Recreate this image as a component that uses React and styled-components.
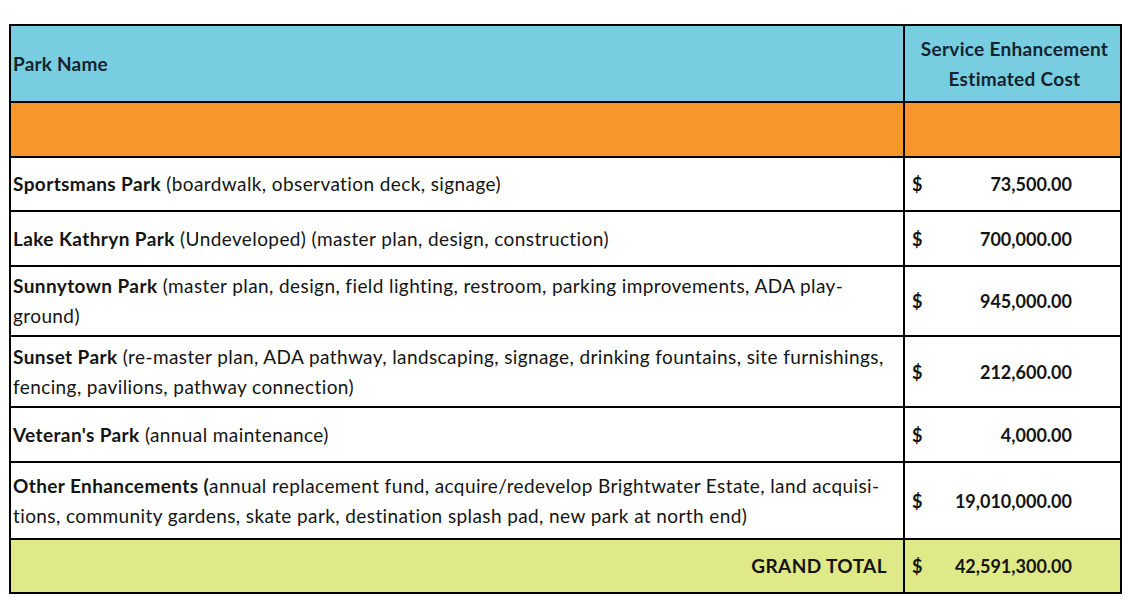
import React from 'react';
import styled, { createGlobalStyle } from 'styled-components';

const GlobalStyle = createGlobalStyle`
  html, body {
    margin: 0;
    background: #ffffff;
  }
  body {
    font-family: Lato, 'Open Sans', sans-serif;
    color: #141414;
  }
`;

const Page = styled.div`
  padding: 24px 0 0 9px;
`;

const Table = styled.div`
  display: grid;
  grid-template-columns: 892px 215px;
  gap: 2px;
  padding: 2px;
  width: max-content;
  background: #000;
`;

const Cell = styled.div`
  display: flex;
  align-items: center;
  min-height: ${(p) => p.$h}px;
  background: ${(p) => p.$bg || '#ffffff'};
  font-size: 18px;
  line-height: 30px;
`;

const NameCell = styled(Cell)`
  font-size: 19px;
  letter-spacing: 0.4px;
  padding: 0 2px;
  justify-content: ${(p) => (p.$right ? 'flex-end' : 'flex-start')};
  padding-right: ${(p) => (p.$right ? '16px' : '2px')};
`;

const HeadCost = styled(Cell)`
  justify-content: center;
  text-align: center;
  font-size: 19px;
  letter-spacing: 0.3px;
  font-weight: 700;
  color: #16242e;
  padding-left: 4px;
`;

const CostCell = styled(Cell)`
  padding: 0 48px 0 7px;
  justify-content: space-between;
  font-weight: 700;
`;

const HeadLabel = styled.span`
  font-weight: 700;
  color: #16242e;
  letter-spacing: 0.2px;
`;

const Bold = styled.b`
  font-weight: 700;
`;

const BLUE = '#79cde0';
const ORANGE = '#f8962c';
const GREEN = '#dfe987';

const rows = [
  { h: 52, name: 'Sportsmans Park', desc: ' (boardwalk, observation deck, signage)', cost: '73,500.00' },
  { h: 53, name: 'Lake Kathryn Park', desc: ' (Undeveloped) (master plan, design, construction)', cost: '700,000.00' },
  {
    h: 68,
    name: 'Sunnytown Park',
    desc: ' (master plan, design, field lighting, restroom, parking improvements, ADA play-',
    rest: 'ground)',
    cost: '945,000.00',
  },
  {
    h: 69,
    name: 'Sunset Park',
    desc: ' (re-master plan, ADA pathway, landscaping, signage, drinking fountains, site furnishings,',
    rest: 'fencing, pavilions, pathway connection)',
    cost: '212,600.00',
  },
  { h: 53, name: "Veteran's Park", desc: ' (annual maintenance)', cost: '4,000.00' },
  {
    h: 75,
    name: 'Other Enhancements (',
    desc: 'annual replacement fund, acquire/redevelop Brightwater Estate, land acquisi-',
    rest: 'tions, community gardens, skate park, destination splash pad, new park at north end)',
    cost: '19,010,000.00',
  },
];

export default function App() {
  return (
    <>
      <GlobalStyle />
      <Page>
        <Table>
          <NameCell $h={75} $bg={BLUE}>
            <HeadLabel>Park Name</HeadLabel>
          </NameCell>
          <HeadCost $h={75} $bg={BLUE}>
            Service Enhancement
            <br />
            Estimated Cost
          </HeadCost>

          <NameCell $h={53} $bg={ORANGE} />
          <Cell $h={53} $bg={ORANGE} />

          {rows.map((r) => (
            <React.Fragment key={r.name}>
              <NameCell $h={r.h}>
                <span>
                  <Bold>{r.name}</Bold>
                  {r.desc}
                  {r.rest && (
                    <>
                      <br />
                      {r.rest}
                    </>
                  )}
                </span>
              </NameCell>
              <CostCell $h={r.h}>
                <span>$</span>
                <span>{r.cost}</span>
              </CostCell>
            </React.Fragment>
          ))}

          <NameCell $h={52} $bg={GREEN} $right>
            <Bold>GRAND TOTAL</Bold>
          </NameCell>
          <CostCell $h={52} $bg={GREEN}>
            <span>$</span>
            <span>42,591,300.00</span>
          </CostCell>
        </Table>
      </Page>
    </>
  );
}
